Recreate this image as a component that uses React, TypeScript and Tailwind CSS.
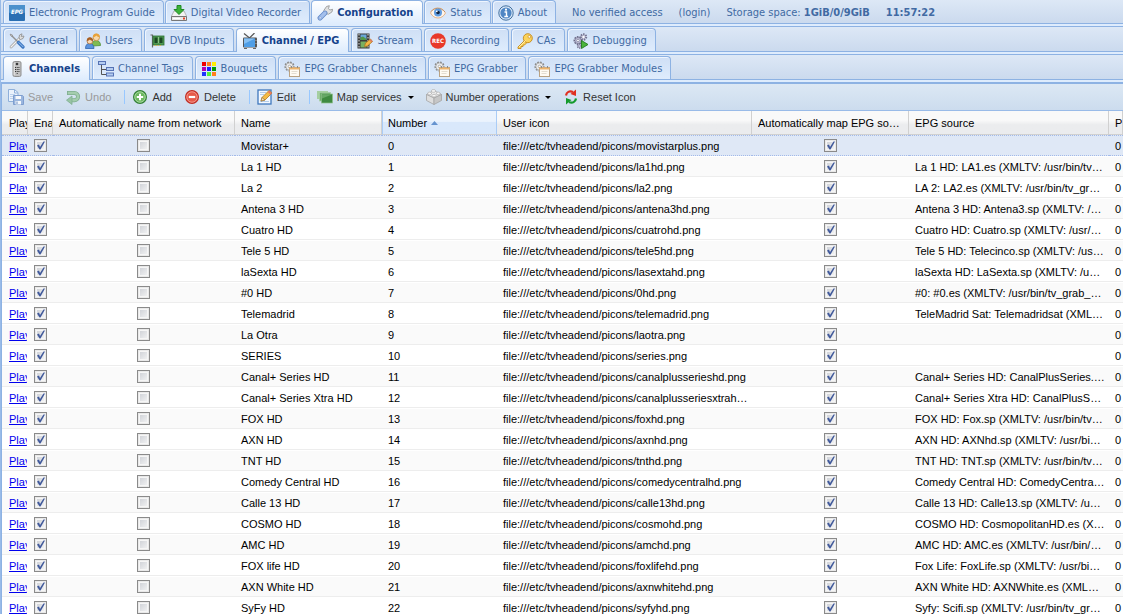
import React, { useState } from 'react';

interface IconProps {
  children: React.ReactNode;
}

const Icon: React.FC<IconProps> = ({ children }) => (
  <svg viewBox="0 0 16 16" className="w-4 h-4 shrink-0" aria-hidden="true">
    {children}
  </svg>
);

const EpgIcon = () => (
  <Icon>
    <rect width="16" height="16" rx="1" fill="#2a6fb3" />
    <rect width="16" height="8" rx="1" fill="#4a90cc" />
    <text x="8" y="9" textAnchor="middle" fontSize="6" fontWeight="bold" fontStyle="italic" fill="#fff">
      EPG
    </text>
  </Icon>
);

const RecorderIcon = () => (
  <Icon>
    <path d="M3 6h10l3 6H0z" fill="#f2f2f2" stroke="#9c9c9c" strokeWidth=".7" />
    <path d="M.500 11.500h15v4H.500z" fill="#e8e8e8" stroke="#777" />
    <path d="M2 13.500h7" stroke="#fff" />
    <path d="M12 13.500h2" stroke="#e0432c" strokeWidth="1.800" />
    <path d="M6 .500h4v4h3L8 9.500 3 4.500h3z" fill="#3cb33a" stroke="#1f8a25" />
  </Icon>
);

const WrenchIcon = () => (
  <Icon>
    <path d="M8 8.500 6.800 5.500 9.500 1.500l2.800-.800-.800 3 1.300 1.300 2.900-.700-.800 2.700-3.400 2.200z" fill="#e2e2e2" stroke="#8f8f8f" strokeWidth=".8" />
    <path d="M3 13 8 8" stroke="#5f86c6" strokeWidth="4.800" strokeLinecap="round" />
    <path d="M3 13 8 8" stroke="#a3bfec" strokeWidth="3.200" strokeLinecap="round" />
    <circle cx="3.200" cy="12.800" r=".9" fill="#fff" stroke="#5f86c6" strokeWidth=".4" />
  </Icon>
);

const EyeIcon = () => (
  <Icon>
    <path d="M.500 8C2.500 4 5 3 8 3s5.500 1.500 7.500 5c-2 3.500-4.500 5-7.500 5S2.500 11.500.500 8z" fill="#fff6ec" stroke="#e3b489" />
    <path d="M1 6.500C4 2.500 11 2 15 7" fill="none" stroke="#b98455" strokeWidth=".8" />
    <circle cx="8" cy="7.500" r="4" fill="#5d9be0" />
    <circle cx="8" cy="7.500" r="1.800" fill="#12233d" />
    <circle cx="6.800" cy="6.300" r=".9" fill="#fff" />
  </Icon>
);

const AboutIcon = () => (
  <Icon>
    <circle cx="8" cy="8" r="7.200" fill="#dbe8f8" stroke="#41709f" />
    <circle cx="8" cy="8" r="5.600" fill="#4f86c4" />
    <path d="M6.500 7h2v4.500M6.300 11.500h3.800" fill="none" stroke="#fff" strokeWidth="1.400" />
    <circle cx="8" cy="4.700" r="1.100" fill="#fff" />
  </Icon>
);

const ToolsIcon = () => (
  <Icon>
    <path d="m2 14 9-9" stroke="#9a9a9a" strokeWidth="2.600" strokeLinecap="round" />
    <path d="m2 14 9-9" stroke="#f2f2f2" strokeWidth="1.400" strokeLinecap="round" />
    <path d="m10 5 .500-3L13 .800 12.300 3.500 15 3l-1 2.500-2.500 1z" fill="#ddd" stroke="#8d8d8d" strokeWidth=".8" />
    <path d="m1.500 1.500 8 8" stroke="#909090" strokeWidth="1.500" />
    <path d="m1 1 3 1.500-1.500 1z" fill="#ccc" stroke="#888" strokeWidth=".6" />
    <path d="m9.500 9.500 4.500 4.500" stroke="#3d78c2" strokeWidth="3.200" strokeLinecap="round" />
    <path d="m10 9.700 4 4" stroke="#9cc4f2" strokeLinecap="round" />
  </Icon>
);

const UsersIcon = () => (
  <Icon>
    <path d="M7.500 13c-.500-4 1-5.500 3.500-5.500s4.500 1.500 4.500 5z" fill="#7fbb52" stroke="#4f8f35" strokeWidth=".8" />
    <circle cx="11.300" cy="4.500" r="3.200" fill="#f9d9a9" stroke="#c48a3e" strokeWidth=".8" />
    <path d="M8 4.500C7.500 1.500 9.500.500 11.300.500s3.800 1 3.400 4c-2-.500-3-1.500-3.400-2-.800 1.200-2 1.800-3.300 2z" fill="#e8a23a" />
    <path d="M.500 15.500c0-3.500 1.500-5 4-5s4.500 1.500 4.500 5z" fill="#5b93dc" stroke="#2f64ad" strokeWidth=".8" />
    <circle cx="4.900" cy="8" r="2.900" fill="#f9d9b4" stroke="#a8703a" strokeWidth=".8" />
    <path d="M1.900 8c-.400-2.700 1.200-3.800 3-3.800S8.300 5.300 7.900 8c-1.500-.300-2.500-1-3-1.600-.700.900-1.700 1.400-3 1.600z" fill="#a85f22" />
  </Icon>
);

const DvbIcon = () => (
  <Icon>
    <path d="M.500 2h2v12.500" fill="none" stroke="#666" strokeWidth="1.200" />
    <rect x="3" y="3" width="11" height="9" fill="#4f9a53" stroke="#2b6f33" strokeWidth=".8" />
    <rect x="4.500" y="4.500" width="3" height="5.500" fill="#1c4a24" />
    <rect x="9.500" y="4.500" width="3" height="5.500" fill="#1c4a24" />
    <path d="M4 12.500h8" stroke="#dcb64a" strokeDasharray="1 1" />
    <path d="M8.500 4v6" stroke="#8cc384" />
  </Icon>
);

const TvIcon = () => (
  <Icon>
    <path d="M2 .500 7.500 5 12.500 0" fill="none" stroke="#555" strokeWidth="1.200" />
    <rect x="1" y="4.500" width="14" height="10" rx="1" fill="#555" />
    <rect x="2" y="5.500" width="11" height="8.500" fill="#4f9ee6" />
    <path d="M2 5.500h11L2 11z" fill="#86c0f3" />
    <path d="M14 7v1M14 10v1" stroke="#bbb" />
    <path d="M2 15.500h3M11 15.500h3" stroke="#666" />
  </Icon>
);

const StreamIcon = () => (
  <Icon>
    <rect x=".500" y=".500" width="12" height="15" fill="#3b3b3b" />
    <path d="M2 1v14M11 1v14" stroke="#ddd" strokeDasharray="1.500 1.500" />
    <rect x="3.500" y="1.500" width="6" height="5.500" fill="#6aa6d8" />
    <path d="M3.500 7V4.500L6 3.500 9.500 6v1z" fill="#529648" />
    <rect x="3.500" y="8.500" width="6" height="6" fill="#79b061" />
    <path d="m7.500 13.500 1-3.500 5-4 2 2.500-5 4.500z" fill="#f2b744" stroke="#a8731f" strokeWidth=".8" />
    <path d="m13 6.500 2 2.500" stroke="#dc7d64" strokeWidth="1.500" />
  </Icon>
);

const RecIcon = () => (
  <Icon>
    <circle cx="8" cy="8" r="7.800" fill="#e8392a" />
    <text x="8" y="10.200" textAnchor="middle" fontSize="6" fontWeight="bold" fill="#fff">
      REC
    </text>
  </Icon>
);

const KeyIcon = () => (
  <Icon>
    <path d="m8 7-7 7v1.500h3v-2h2V12h1.500l2.500-2.500z" fill="#fbd35b" stroke="#c58a1c" strokeWidth=".9" />
    <circle cx="10.800" cy="5.200" r="4.500" fill="#fbd35b" stroke="#c58a1c" strokeWidth=".9" />
    <circle cx="12.300" cy="3.800" r="1.300" fill="#fff" stroke="#c58a1c" strokeWidth=".7" />
    <path d="m2 14 6.500-6.500" stroke="#fff0b0" />
  </Icon>
);

const DebugIcon = () => (
  <Icon>
    <circle cx="5" cy="7.500" r="3.500" fill="#b9b9d3" stroke="#686884" strokeWidth="2" strokeDasharray="1.500 1" />
    <circle cx="5" cy="7.500" r="3" fill="#c4c4dc" stroke="#72728f" strokeWidth=".6" />
    <circle cx="5" cy="7.500" r="1.300" fill="#fff" stroke="#686884" strokeWidth=".6" />
    <circle cx="10.500" cy="4" r="2.700" fill="#c9c9dc" stroke="#72728f" strokeWidth="2" strokeDasharray="1.400 1" />
    <circle cx="10.500" cy="4" r="1" fill="#fff" />
    <circle cx="6.500" cy="13" r="2" fill="#b9b9d3" stroke="#72728f" strokeWidth="1.500" strokeDasharray="1.200 .8" />
    <path d="M8.500 7.500v8l6.500-4z" fill="#4bb53c" stroke="#227a1f" strokeWidth=".9" />
  </Icon>
);

const RemoteIcon = () => (
  <Icon>
    <rect x="4" y=".500" width="8" height="15" rx="1.500" fill="#c2c2c2" stroke="#8e8e8e" />
    <path d="M5.200 2v12" stroke="#e6e6e6" />
    <circle cx="8" cy="3" r="1.300" fill="#3a3a3a" />
    <path d="M6 6.500h1m.700 0h1m.700 0h1M6 8.500h1m.700 0h1m.700 0h1M6 10.500h1m.700 0h1m.700 0h1M7.700 12.500h1" stroke="#333" strokeWidth="1.100" />
  </Icon>
);

const TagsIcon = () => (
  <Icon>
    <path d="M3.500 4v9.500H8M3.500 8.500H8" fill="none" stroke="#555" />
    <rect x=".500" y=".500" width="7" height="3" fill="#b5cdf0" stroke="#5673b5" />
    <rect x="8.500" y="6.500" width="7" height="3" fill="#b5cdf0" stroke="#5673b5" />
    <rect x="8.500" y="12" width="7" height="3" fill="#b5cdf0" stroke="#5673b5" />
  </Icon>
);

const BouquetIcon = () => (
  <Icon>
    <rect x="1" y="1" width="4" height="4" fill="#f00000" />
    <rect x="6" y="1" width="4" height="4" fill="#ff7f1e" />
    <rect x="11" y="1" width="4" height="4" fill="#ffee00" />
    <rect x="1" y="6" width="4" height="4" fill="#b300b3" />
    <rect x="6" y="6" width="4" height="4" fill="#1e1eff" />
    <rect x="11" y="6" width="4" height="4" fill="#009a00" />
    <rect x="1" y="11" width="4" height="4" fill="#1e35ff" />
    <rect x="6" y="11" width="4" height="4" fill="#53f03c" />
    <rect x="11" y="11" width="4" height="4" fill="#ff7f1e" />
  </Icon>
);

const GrabberIcon = () => (
  <Icon>
    <circle cx="5.500" cy="5.500" r="4" fill="#dedede" stroke="#8a8a8a" strokeWidth="2.200" strokeDasharray="1.600 1.100" />
    <circle cx="5.500" cy="5.500" r="3.600" fill="#ececec" stroke="#a5a5a5" strokeWidth=".7" />
    <circle cx="5.500" cy="5.500" r="1.300" fill="#fff" stroke="#999" strokeWidth=".7" />
    <rect x="5.500" y="6.500" width="10" height="9" fill="#fffaf2" stroke="#b9a283" />
    <path d="M5.500 7.500h10" stroke="#edb46c" strokeWidth="2" />
    <path d="M7.500 10.500h6M7.500 12.500h5" stroke="#e3dccf" />
    <path d="M7.500 5v2M13.500 5v2" stroke="#8b8b8b" />
  </Icon>
);

const SaveIcon = () => (
  <Icon>
    <path d="M.500.500h6l3.500 3v9H.500z" fill="#eaf2fc" stroke="#8fb0da" />
    <path d="M6.500.500v3.500H10" fill="none" stroke="#8fb0da" />
    <path d="M2 5.500h5M2 7.500h3M2 9.500h3" stroke="#bcd1ec" />
    <path d="M5.500 6.500h9l1 1v8h-10z" fill="#9ab6de" stroke="#7e9ecf" />
    <rect x="7.500" y="7" width="5.500" height="3" fill="#f5f8fc" />
    <rect x="7.500" y="12" width="5.500" height="3.500" fill="#f5f8fc" />
    <path d="M9 12.500v2.500" stroke="#6c8fc2" />
  </Icon>
);

const UndoIcon = () => (
  <Icon>
    <path d="M2 4h7.500a3.600 3.600 0 0 1 0 7.200H6" fill="none" stroke="#7fae90" strokeWidth="4" />
    <path d="M2.800 4h6.700a3.600 3.600 0 0 1 0 7.200H6" fill="none" stroke="#a4cdae" strokeWidth="2.400" />
    <path d="M7 7v8.500L1.500 11.200z" fill="#98c4a4" stroke="#7fae90" strokeWidth=".8" />
  </Icon>
);

const AddIcon = () => (
  <Icon>
    <circle cx="8" cy="8" r="6.400" fill="#6cb860" stroke="#35803a" strokeWidth="1.200" />
    <circle cx="8" cy="8" r="5.200" fill="none" stroke="#b5e0ad" strokeWidth=".8" />
    <path d="M8 4.800v6.400M4.800 8h6.400" stroke="#fff" strokeWidth="2" />
  </Icon>
);

const DeleteIcon = () => (
  <Icon>
    <circle cx="8" cy="8" r="6.400" fill="#e65a49" stroke="#bf2f26" strokeWidth="1.200" />
    <circle cx="8" cy="8" r="5.200" fill="none" stroke="#f5a69b" strokeWidth=".8" />
    <path d="M4.800 8h6.400" stroke="#fff" strokeWidth="2.200" />
  </Icon>
);

const EditIcon = () => (
  <Icon>
    <rect x="1" y="1" width="13" height="14" fill="#f4f9ff" stroke="#3f78bd" strokeWidth="1.300" />
    <path d="M3 3.500h6M3 5.500h4M3 12.500h9" stroke="#b3cdea" />
    <path d="m4 12 1-3.500L12 1.500l3 2.500-7 7z" fill="#f5bb45" stroke="#b27a22" strokeWidth=".8" />
    <path d="m4 12 1-3.500 3 2.500z" fill="#f8e2b8" stroke="#8a6a35" strokeWidth=".6" />
    <path d="m11.500 2.500 2.700 2.300" stroke="#e8756a" strokeWidth="1.800" />
  </Icon>
);

const MapIcon = () => (
  <Icon>
    <rect x="0" y="2" width="11" height="8" fill="#a5cfa1" />
    <rect x="2.500" y="3.500" width="11" height="8.500" fill="#6fae6c" stroke="#a9cfa6" strokeWidth=".7" />
    <rect x="4.500" y="5" width="11" height="9" fill="#3f8a40" stroke="#8fbf8c" strokeWidth=".7" />
    <path d="M5 9.500v-4h10z" fill="#67a866" />
  </Icon>
);

const BrickIcon = () => (
  <Icon>
    <path d="m.500 5.500 7.500-4 7.500 4L8 9z" fill="#ededed" stroke="#aaa" strokeWidth=".8" />
    <path d="M.500 5.500v6L8 15.500V9z" fill="#dedede" stroke="#a5a5a5" strokeWidth=".8" />
    <path d="M15.500 5.500v6L8 15.500V9z" fill="#c6c6c6" stroke="#a5a5a5" strokeWidth=".8" />
    <path d="M5.500 2.500v-1c0-1.200 4-1.200 4 0v1c0 1-4 1-4 0zM1.800 5V4c0-1.200 3.700-1.200 3.700 0v1c0 1-3.700 1-3.700 0zM10.300 5V4c0-1.200 3.700-1.200 3.700 0v1c0 1-3.700 1-3.700 0zM6 7.200v-1c0-1.200 4-1.200 4 0v1c0 1-4 1-4 0z" fill="#f7f7f7" stroke="#a8a8a8" strokeWidth=".7" />
  </Icon>
);

const ResetIcon = () => (
  <Icon>
    <path d="M3 6.500C3.500 3 6.500 1.500 10 3" fill="none" stroke="#e03020" strokeWidth="2.200" />
    <path d="M13 .500V7L7.500 5z" fill="#e03020" />
    <path d="M13 9.500c-.500 3.500-3.500 5-7 3.500" fill="none" stroke="#159a2c" strokeWidth="2.200" />
    <path d="M3 15.500V9l5.500 2z" fill="#159a2c" />
  </Icon>
);

interface Tab {
  label: string;
  icon: React.FC;
}

const mainTabs: Tab[] = [
  { label: 'Electronic Program Guide', icon: EpgIcon },
  { label: 'Digital Video Recorder', icon: RecorderIcon },
  { label: 'Configuration', icon: WrenchIcon },
  { label: 'Status', icon: EyeIcon },
  { label: 'About', icon: AboutIcon },
];

const configTabs: Tab[] = [
  { label: 'General', icon: ToolsIcon },
  { label: 'Users', icon: UsersIcon },
  { label: 'DVB Inputs', icon: DvbIcon },
  { label: 'Channel / EPG', icon: TvIcon },
  { label: 'Stream', icon: StreamIcon },
  { label: 'Recording', icon: RecIcon },
  { label: 'CAs', icon: KeyIcon },
  { label: 'Debugging', icon: DebugIcon },
];

const channelTabs: Tab[] = [
  { label: 'Channels', icon: RemoteIcon },
  { label: 'Channel Tags', icon: TagsIcon },
  { label: 'Bouquets', icon: BouquetIcon },
  { label: 'EPG Grabber Channels', icon: GrabberIcon },
  { label: 'EPG Grabber', icon: GrabberIcon },
  { label: 'EPG Grabber Modules', icon: GrabberIcon },
];

interface TabBarProps {
  tabs: Tab[];
  initial: string;
  top?: boolean;
  children?: React.ReactNode;
}

const TabBar: React.FC<TabBarProps> = ({ tabs, initial, top, children }) => {
  const [active, setActive] = useState(initial);

  return (
    <div
      className={
        top
          ? 'flex h-6 pl-0.5 border-b border-[#8db2e3] bg-linear-to-b from-[#dde8f6] to-[#cbdaee] whitespace-nowrap'
          : 'flex h-[26px] mt-0.5 pl-0.5 border-y border-[#8db2e3] bg-linear-to-b from-[#dde8f6] to-[#cbdaee] whitespace-nowrap'
      }
    >
      <div className={top ? 'flex gap-px' : 'flex gap-0.5 pt-px'} role="tablist">
        {tabs.map(({ label, icon: TabIcon }) => (
          <button
            key={label}
            role="tab"
            aria-selected={label === active}
            onClick={() => setActive(label)}
            className={
              label === active
                ? 'flex items-center gap-1 -mb-px pt-px pb-px pl-[5px] pr-[9px] border border-b-0 border-[#8db2e3] rounded-t bg-linear-to-b from-white to-[#deecfd] font-bold text-[#15428b]'
                : 'flex items-center gap-1 pt-px pl-[5px] pr-2 border border-b-0 border-[#8db2e3] rounded-t bg-linear-to-b from-[#cfdff5] to-[#deecfd] text-[#416aa3] shadow-[inset_1px_1px_0_#eef5fe]'
            }
          >
            <TabIcon />
            <span>{label}</span>
          </button>
        ))}
      </div>
      {children}
    </div>
  );
};

interface ToolButtonProps {
  label: string;
  icon: React.FC;
  disabled?: boolean;
  menu?: boolean;
}

const ToolButton: React.FC<ToolButtonProps> = ({ label, icon: ToolIcon, disabled, menu }) => (
  <button disabled={disabled} className="flex items-center gap-1 px-1.5 text-[#333] disabled:text-[#999]">
    <ToolIcon />
    <span>{label}</span>
    {menu && (
      <svg viewBox="0 0 6 3" className="w-1.5 h-[3px] ml-0.5" aria-hidden="true">
        <path d="M0 0h6L3 3z" fill="#000" />
      </svg>
    )}
  </button>
);

const Separator = () => <div className="w-px h-3.5 ml-[7px] mr-px bg-[#98c8ff]" />;

interface CheckProps {
  label: string;
  defaultChecked?: boolean;
}

const Check: React.FC<CheckProps> = ({ label, defaultChecked }) => (
  <span className="relative block w-[13px] h-[13px]">
    <input
      type="checkbox"
      aria-label={label}
      defaultChecked={defaultChecked}
      className="peer block appearance-none w-[13px] h-[13px] border border-[#8a8a8a] bg-linear-to-br from-[#c9ccd2] to-[#f8f8f8] shadow-[inset_0_0_0_1px_#e9e9e9,inset_0_0_0_2px_#f6f6f6]"
    />
    <svg viewBox="0 0 13 13" className="absolute inset-0 hidden peer-checked:block pointer-events-none" aria-hidden="true">
      <path d="M3 6.500 5 5.500 6 8 9.500 2.500H11L6.500 10.500H5.500z" fill="#40599b" />
    </svg>
  </span>
);

interface Channel {
  name: string;
  icon: string;
  epg: string;
}

const channels: Channel[] = [
  { name: 'Movistar+', icon: 'movistarplus.png', epg: '' },
  { name: 'La 1 HD', icon: 'la1hd.png', epg: 'La 1 HD: LA1.es (XMLTV: /usr/bin/tv…' },
  { name: 'La 2', icon: 'la2.png', epg: 'LA 2: LA2.es (XMLTV: /usr/bin/tv_gr…' },
  { name: 'Antena 3 HD', icon: 'antena3hd.png', epg: 'Antena 3 HD: Antena3.sp (XMLTV: /…' },
  { name: 'Cuatro HD', icon: 'cuatrohd.png', epg: 'Cuatro HD: Cuatro.sp (XMLTV: /usr/…' },
  { name: 'Tele 5 HD', icon: 'tele5hd.png', epg: 'Tele 5 HD: Telecinco.sp (XMLTV: /us…' },
  { name: 'laSexta HD', icon: 'lasextahd.png', epg: 'laSexta HD: LaSexta.sp (XMLTV: /u…' },
  { name: '#0 HD', icon: '0hd.png', epg: '#0: #0.es (XMLTV: /usr/bin/tv_grab_…' },
  { name: 'Telemadrid', icon: 'telemadrid.png', epg: 'TeleMadrid Sat: Telemadridsat (XML…' },
  { name: 'La Otra', icon: 'laotra.png', epg: '' },
  { name: 'SERIES', icon: 'series.png', epg: '' },
  { name: 'Canal+ Series HD', icon: 'canalplusserieshd.png', epg: 'Canal+ Series HD: CanalPlusSeries.…' },
  { name: 'Canal+ Series Xtra HD', icon: 'canalplusseriesxtrah…', epg: 'Canal+ Series Xtra HD: CanalPlusS…' },
  { name: 'FOX HD', icon: 'foxhd.png', epg: 'FOX HD: Fox.sp (XMLTV: /usr/bin/tv…' },
  { name: 'AXN HD', icon: 'axnhd.png', epg: 'AXN HD: AXNhd.sp (XMLTV: /usr/bi…' },
  { name: 'TNT HD', icon: 'tnthd.png', epg: 'TNT HD: TNT.sp (XMLTV: /usr/bin/tv…' },
  { name: 'Comedy Central HD', icon: 'comedycentralhd.png', epg: 'Comedy Central HD: ComedyCentra…' },
  { name: 'Calle 13 HD', icon: 'calle13hd.png', epg: 'Calle 13 HD: Calle13.sp (XMLTV: /u…' },
  { name: 'COSMO HD', icon: 'cosmohd.png', epg: 'COSMO HD: CosmopolitanHD.es (X…' },
  { name: 'AMC HD', icon: 'amchd.png', epg: 'AMC HD: AMC.es (XMLTV: /usr/bin/…' },
  { name: 'FOX life HD', icon: 'foxlifehd.png', epg: 'Fox Life: FoxLife.sp (XMLTV: /usr/bi…' },
  { name: 'AXN White HD', icon: 'axnwhitehd.png', epg: 'AXN White HD: AXNWhite.es (XML…' },
  { name: 'SyFy HD', icon: 'syfyhd.png', epg: 'Syfy: Scifi.sp (XMLTV: /usr/bin/tv_gr…' },
];

const headers = [
  'Play',
  'Enabled',
  'Automatically name from network',
  'Name',
  'Number',
  'User icon',
  'Automatically map EPG so…',
  'EPG source',
  'P',
];

const ChannelGrid = () => {
  const [selected, setSelected] = useState(0);

  return (
    <table className="w-full table-fixed border-separate border-spacing-0 bg-white text-black whitespace-nowrap">
      <colgroup>
        <col className="w-[26px]" />
        <col className="w-[25px]" />
        <col className="w-[182px]" />
        <col className="w-[147px]" />
        <col className="w-[115px]" />
        <col className="w-[255px]" />
        <col className="w-[157px]" />
        <col className="w-[200px]" />
        <col />
      </colgroup>
      <thead>
        <tr className="h-6">
          {headers.map((header) => (
            <th
              key={header}
              className={
                header === 'Number'
                  ? 'p-0 pl-[5px] border-x border-b border-x-[#aaccf6] border-b-[#d0d0d0] bg-linear-to-b from-[#ebf3fd] from-45% to-[#d9e8fb] to-50% text-left font-normal'
                  : 'p-0 pl-1.5 first:pl-[7px] border-r border-b border-[#d0d0d0] bg-linear-to-b from-[#f9f9f9] from-40% to-[#ebecee] to-60% text-left font-normal'
              }
            >
              {header === 'Number' ? (
                <button className="flex items-center gap-1">
                  {header}
                  <svg viewBox="0 0 7 4" className="w-[7px] h-1" aria-hidden="true">
                    <path d="M3.500 0 7 4H0z" fill="#6593cf" />
                  </svg>
                </button>
              ) : (
                <div className="overflow-hidden">{header}</div>
              )}
            </th>
          ))}
        </tr>
      </thead>
      <tbody>
        {channels.map((channel, idx) => (
          <tr
            key={channel.name}
            onClick={() => setSelected(idx)}
            className={
              idx === selected
                ? 'h-[21px] bg-[#dfe8f6] *:border-y *:border-dotted *:border-[#a3bae9]'
                : 'h-[21px] even:bg-[#fafafa] *:border-y *:border-t-white *:border-b-[#ededed]'
            }
          >
            <td className="p-0 pl-[7px]">
              <a href="#play" className="block overflow-hidden w-[18px] text-[#0000ee] underline">
                Play
              </a>
            </td>
            <td className="p-0 pl-1.5">
              <Check label={`Enable ${channel.name}`} defaultChecked />
            </td>
            <td className="p-0 pr-0.5">
              <div className="flex justify-center">
                <Check label={`Automatically name ${channel.name}`} />
              </div>
            </td>
            <td className="p-0 pl-1.5 overflow-hidden">{channel.name}</td>
            <td className="p-0 pl-1.5">{idx}</td>
            <td className="p-0 pl-1.5 overflow-hidden">file:///etc/tvheadend/picons/{channel.icon}</td>
            <td className="p-0">
              <div className="flex justify-center">
                <Check label={`Automatically map ${channel.name}`} defaultChecked />
              </div>
            </td>
            <td className="p-0 pl-1.5 overflow-hidden">{channel.epg}</td>
            <td className="p-0 pl-1.5 overflow-hidden">0</td>
          </tr>
        ))}
      </tbody>
    </table>
  );
};

export default function App() {
  return (
    <div className="h-screen overflow-hidden border-l border-[#99bbe8] bg-[#deecfd] font-['DejaVu_Sans_Condensed','DejaVu_Sans',sans-serif] text-[11px] leading-4">
      <TabBar tabs={mainTabs} initial="Configuration" top>
        <div className="flex items-center gap-4 pt-0.5 pl-4 text-[#416aa3]">
          <span>No verified access</span>
          <a href="#login">(login)</a>
          <span>
            Storage space: <b>1GiB/0/9GiB</b>
          </span>
          <b>11:57:22</b>
        </div>
      </TabBar>
      <TabBar tabs={configTabs} initial="Channel / EPG" />
      <TabBar tabs={channelTabs} initial="Channels" />
      <div className="mt-0.5 border-l border-t-2 border-[#8db2e3] font-['Liberation_Sans',Arial,sans-serif]">
        <div className="flex items-center h-[27px] border-b border-[#99bbe8] bg-linear-to-b from-[#dce8f4] to-[#ccdcee]">
          <ToolButton label="Save" icon={SaveIcon} disabled />
          <ToolButton label="Undo" icon={UndoIcon} disabled />
          <Separator />
          <ToolButton label="Add" icon={AddIcon} />
          <ToolButton label="Delete" icon={DeleteIcon} />
          <Separator />
          <ToolButton label="Edit" icon={EditIcon} />
          <Separator />
          <ToolButton label="Map services" icon={MapIcon} menu />
          <ToolButton label="Number operations" icon={BrickIcon} menu />
          <ToolButton label="Reset Icon" icon={ResetIcon} />
        </div>
        <ChannelGrid />
      </div>
    </div>
  );
}
